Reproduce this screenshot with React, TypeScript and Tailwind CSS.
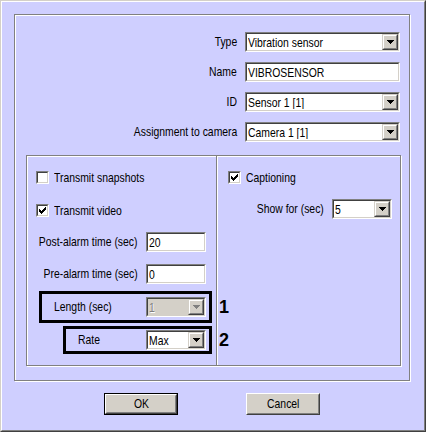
import React from "react";

const etched = "border border-[#808080] shadow-[1px_1px_0_#fff,inset_1px_1px_0_#fff]";

// the dialog font is a narrow sans: squeeze Liberation Sans horizontally
function T({ children, side = "left" }: { children: React.ReactNode; side?: "left" | "right" | "center" }) {
  const origin = side === "right" ? "origin-right" : side === "center" ? "origin-center" : "origin-left";
  return <span className={`inline-block whitespace-nowrap scale-x-[0.8] ${origin}`}>{children}</span>;
}

function Arrow({ disabled }: { disabled?: boolean }) {
  return (
    <div className="w-4 h-full shrink-0 border border-t-[#d4d0c8] border-l-[#d4d0c8] border-r-[#404040] border-b-[#404040]">
      <div className="w-full h-full bg-[#d4d0c8] border border-t-white border-l-white border-r-[#808080] border-b-[#808080] flex items-center justify-center">
        <svg width="7" height="4" viewBox="0 0 7 4" shapeRendering="crispEdges">
          <path
            d="M0 0h7v1h-1v1h-1v1h-1v1h-1v-1h-1v-1h-1v-1h-1z"
            fill={disabled ? "#808080" : "#000"}
          />
        </svg>
      </div>
    </div>
  );
}

function Field({
  w,
  value,
  select,
  disabled,
}: {
  w: string;
  value: string;
  select?: boolean;
  disabled?: boolean;
}) {
  return (
    <div className={`${w} h-5 shrink-0 border border-t-[#808080] border-l-[#808080] border-r-white border-b-white`}>
      <div
        className={`h-full flex items-center border border-t-[#404040] border-l-[#404040] border-r-[#d4d0c8] border-b-[#d4d0c8] ${
          disabled ? "bg-[#d4d0c8] text-[#808080] [text-shadow:1px_1px_0_#fff]" : "bg-white text-black"
        }`}
      >
        <span className="flex-1 pl-px overflow-hidden leading-none">
          <T>{value}</T>
        </span>
        {select && <Arrow disabled={disabled} />}
      </div>
    </div>
  );
}

// 7x7 windows check glyph, row by row
const tick: [number, number, number][] = [
  [6, 0, 1],
  [5, 1, 2],
  [0, 2, 1],
  [4, 2, 3],
  [0, 3, 2],
  [3, 3, 3],
  [0, 4, 5],
  [1, 5, 3],
  [2, 6, 1],
];

function Check({ checked }: { checked?: boolean }) {
  return (
    <div className="w-[13px] h-[13px] shrink-0 border border-t-[#808080] border-l-[#808080] border-r-white border-b-white">
      <div className="w-full h-full bg-white border border-t-[#404040] border-l-[#404040] border-r-[#d4d0c8] border-b-[#d4d0c8] flex items-center justify-center">
        {checked && (
          <svg width="7" height="7" viewBox="0 0 7 7" shapeRendering="crispEdges">
            {tick.map(([x, y, w], i) => (
              <rect key={i} x={x} y={y} width={w} height={1} fill="#000" />
            ))}
          </svg>
        )}
      </div>
    </div>
  );
}

function Button({ children, def }: { children: React.ReactNode; def?: boolean }) {
  return (
    <div className={`w-[74px] h-[22px] ${def ? "border border-black" : ""}`}>
      <div className="h-full border border-t-white border-l-white border-r-[#404040] border-b-[#404040]">
        <div className="h-full bg-[#d4d0c8] border border-t-[#d4d0c8] border-l-[#d4d0c8] border-r-[#808080] border-b-[#808080] flex items-center justify-center">
          <T side="center">{children}</T>
        </div>
      </div>
    </div>
  );
}

const topRows = [
  { label: "Type", value: "Vibration sensor", select: true },
  { label: "Name", value: "VIBROSENSOR", select: false },
  { label: "ID", value: "Sensor 1 [1]", select: true },
  { label: "Assignment to camera", value: "Camera 1 [1]", select: true },
];

export default function App() {
  return (
    <div className="w-[426px] h-[432px] border border-t-[#d4d0c8] border-l-[#d4d0c8] border-r-[#404040] border-b-[#404040] font-['Liberation_Sans',Arial,sans-serif] text-[13px] text-black">
      <div className="w-full h-full bg-[#cfcfff] border border-t-white border-l-white border-r-[#808080] border-b-[#808080] flex flex-col">
        {/* Outer group */}
        <div className={`ml-3 mt-3 w-[396px] h-[367px] ${etched} flex flex-col pt-[17px]`}>
          <div className="flex flex-col gap-[10px] pr-[9px]">
            {topRows.map((r) => (
              <div key={r.label} className="flex items-center justify-end gap-2">
                <T side="right">{r.label}</T>
                <Field w="w-[155px]" value={r.value} select={r.select} />
              </div>
            ))}
          </div>

          {/* Inner group */}
          <div className={`ml-[11px] mt-[13px] w-[375px] h-[211px] ${etched} flex`}>
            <div className="w-[189px] flex flex-col pt-[15px]">
              <div className="flex items-center gap-[5px] pl-[9px] h-[13px]">
                <Check />
                <T>Transmit snapshots</T>
              </div>
              <div className="flex items-center gap-[5px] pl-[9px] h-[13px] mt-5">
                <Check checked />
                <T>Transmit video</T>
              </div>
              <div className="flex items-center justify-end gap-2 pr-[10px] mt-[15px]">
                <T side="right">Post-alarm time (sec)</T>
                <Field w="w-[60px]" value="20" />
              </div>
              <div className="flex items-center justify-end gap-2 pr-[10px] mt-3">
                <T side="right">Pre-alarm time (sec)</T>
                <Field w="w-[60px]" value="0" />
              </div>
              <div className="relative self-end mr-1 mt-[7px] w-[173px] h-8 border-[3px] border-black flex items-center justify-between pl-3 pr-[3px]">
                <T>Length (sec)</T>
                <Field w="w-[60px]" value="1" select disabled />
                <span className="absolute left-full ml-[10px] top-1/2 -translate-y-1/2 font-bold text-[18px] leading-none">
                  1
                </span>
              </div>
              <div className="relative self-end mr-1 mt-[3px] w-[149px] h-7 border-[3px] border-black flex items-center justify-between pl-3 pr-[3px]">
                <T>Rate</T>
                <Field w="w-[60px]" value="Max" select />
                <span className="absolute left-full ml-[10px] top-1/2 -translate-y-1/2 font-bold text-[18px] leading-none">
                  2
                </span>
              </div>
            </div>

            <div className="flex-1 border-l border-[#808080] shadow-[inset_1px_0_0_#fff] flex flex-col pt-[15px]">
              <div className="flex items-center gap-[5px] pl-[11px] h-[13px]">
                <Check checked />
                <T>Captioning</T>
              </div>
              <div className="flex items-center justify-end gap-2 pr-2 mt-[15px]">
                <T side="right">Show for (sec)</T>
                <Field w="w-[60px]" value="5" select />
              </div>
            </div>
          </div>
        </div>

        {/* Buttons */}
        <div className="flex gap-[68px] ml-[102px] mt-3">
          <Button def>OK</Button>
          <Button>Cancel</Button>
        </div>
      </div>
    </div>
  );
}
